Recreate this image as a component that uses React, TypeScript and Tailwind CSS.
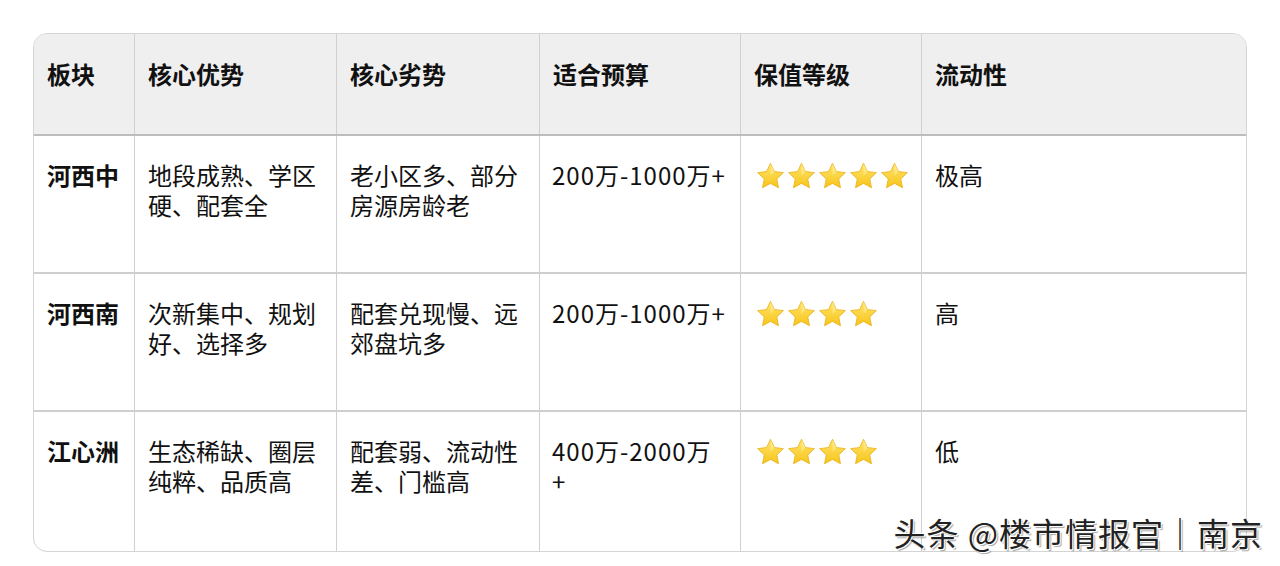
import React from 'react';

const cols = 'grid grid-cols-[100px_202px_203px_201px_181px_325px]';

const headers = ['板块', '核心优势', '核心劣势', '适合预算', '保值等级', '流动性'];

const rows = [
  { area: '河西中', pro: '地段成熟、学区硬、配套全', con: '老小区多、部分房源房龄老', budget: ['200万-1000万+'], stars: 5, liquidity: '极高' },
  { area: '河西南', pro: '次新集中、规划好、选择多', con: '配套兑现慢、远郊盘坑多', budget: ['200万-1000万+'], stars: 4, liquidity: '高' },
  { area: '江心洲', pro: '生态稀缺、圈层纯粹、品质高', con: '配套弱、流动性差、门槛高', budget: ['400万-2000万', '+'], stars: 4, liquidity: '低' },
];

function Star() {
  return (
    <svg width="31" height="30" viewBox="0 0 24 24">
      <defs>
        <linearGradient id="starFill" x1="0" y1="0" x2="0" y2="1">
          <stop offset="0%" stopColor="#ffe46b" />
          <stop offset="100%" stopColor="#f6c51a" />
        </linearGradient>
      </defs>
      <path
        d="M12 1.8l3.1 6.6 7.2.9-5.3 5 1.4 7.1L12 17.9l-6.4 3.5 1.4-7.1-5.3-5 7.2-.9z"
        fill="url(#starFill)"
        stroke="#e9ab0c"
        strokeWidth="0.6"
        strokeLinejoin="round"
      />
      <path d="M12 1.8l3.1 6.6L12 12z" fill="#fff3a8" opacity="0.5" />
    </svg>
  );
}

export default function App() {
  return (
    <div
      className="relative h-[566px] w-[1280px] overflow-hidden bg-white text-[#111]"
      style={{ fontFamily: '"Noto Sans CJK SC", "Noto Sans", sans-serif' }}
    >
      <div className="ml-[33px] mt-[33px] w-[1214px] overflow-hidden rounded-[14px] border border-[#d4d4d4]">
        {/* header */}
        <div className={`${cols} h-[102px] border-b-2 border-[#bdbdbd] bg-[#efefef]`}>
          {headers.map((h, i) => (
            <div
              key={h}
              className={`px-[13px] pt-[25px] text-[24px] font-bold leading-[30px] ${i > 0 ? 'border-l border-[#d0d0d0]' : ''}`}
            >
              {h}
            </div>
          ))}
        </div>

        {/* body */}
        {rows.map((r, ri) => (
          <div
            key={r.area}
            className={`${cols} ${ri < rows.length - 1 ? 'h-[138px] border-b-2 border-[#cfcfcf]' : 'h-[139px]'}`}
          >
            <div className="px-[13px] pt-[24px] text-[24px] font-bold leading-[30px]">{r.area}</div>
            <div className="border-l border-[#d0d0d0] px-[13px] pt-[24px] text-[24px] leading-[30px]">{r.pro}</div>
            <div className="border-l border-[#d0d0d0] px-[13px] pt-[24px] text-[24px] leading-[30px]">{r.con}</div>
            <div className="border-l border-[#d0d0d0] pl-[12px] pt-[24px] text-[24px] leading-[30px] tracking-[1px]">
              {r.budget.map((line) => (
                <div key={line} className="whitespace-nowrap">{line}</div>
              ))}
            </div>
            <div className="border-l border-[#d0d0d0] pl-[14px] pt-[25px]">
              <div className="flex">
                {Array.from({ length: r.stars }).map((_, i) => (
                  <Star key={i} />
                ))}
              </div>
            </div>
            <div className="border-l border-[#d0d0d0] px-[13px] pt-[24px] text-[24px] leading-[30px]">{r.liquidity}</div>
          </div>
        ))}
      </div>

      {/* watermark */}
      <div className="absolute bottom-[16px] right-[17px] text-[32px] leading-[36px] tracking-[1px] text-[#222] [text-shadow:1px_1px_0_#fff,-1px_-1px_0_#fff,2px_2px_1px_rgba(0,0,0,0.35)]">
        头条 @楼市情报官｜南京
      </div>
    </div>
  );
}
